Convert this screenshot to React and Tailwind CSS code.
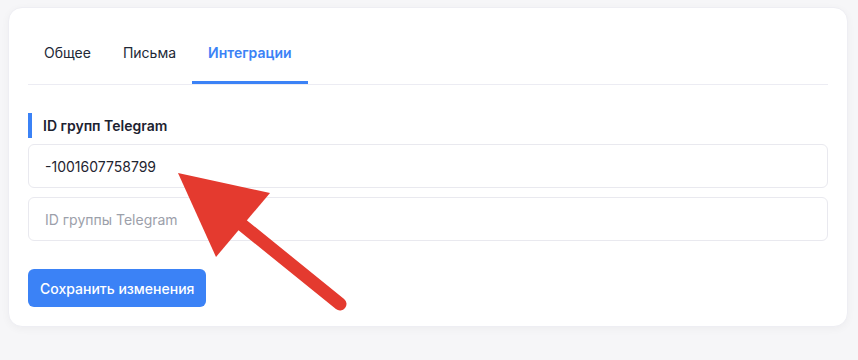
export default function App() {
  return (
    <div className="min-h-[360px] w-[858px] bg-[#f6f6f8] pt-[7px] px-[8px] relative" style={{ fontFamily: "Inter, 'Noto Sans', sans-serif" }}>
      <div className="w-[840px] rounded-[14px] bg-white border border-[#eeeef3] shadow-[0_2px_8px_rgba(0,0,0,0.04)] px-[19px] pt-[19px] pb-[19px]">
        <div className="flex border-b border-[#ececf3]">
          <div className="px-4 pt-4 pb-[18px] border-b-[3px] border-transparent text-[14px] leading-5 text-[#222836]">Общее</div>
          <div className="px-4 pt-4 pb-[18px] border-b-[3px] border-transparent text-[14px] leading-5 text-[#222836]">Письма</div>
          <div className="px-4 pt-4 pb-[18px] border-b-[3px] border-[#3b82f6] text-[14px] leading-5 font-semibold text-[#3b82f6]">Интеграции</div>
        </div>
        <div className="mt-[28px] flex items-center h-[25px] border-l-4 border-[#3b82f6] pl-[11px] text-[14px] font-semibold text-[#1d2230]">ID групп Telegram</div>
        <div className="mt-[6px] flex flex-col gap-[9px]">
          <input
            className="h-[44px] w-full rounded-[6px] border border-[#e9e9ef] px-4 text-[14px] text-[#1f2430] outline-none"
            style={{ fontFamily: "Inter, sans-serif" }}
            defaultValue="-1001607758799"
          />
          <input
            className="h-[44px] w-full rounded-[6px] border border-[#e9e9ef] px-4 text-[14px] text-[#1f2430] placeholder:text-[#9ca0aa] outline-none"
            style={{ fontFamily: "Inter, sans-serif" }}
            placeholder="ID группы Telegram"
          />
        </div>
        <button className="mt-[28px] h-[38px] rounded-[6px] bg-[#3b82f6] px-3 text-[14px] font-medium text-white">
          Сохранить изменения
        </button>
      </div>
      <svg className="absolute left-0 top-0 pointer-events-none" width="858" height="360" viewBox="0 0 858 360">
        <line x1="230" y1="215" x2="340" y2="304" stroke="#e43a2f" strokeWidth="13" strokeLinecap="round" />
        <polygon points="178,173 270,193 216,257" fill="#e43a2f" />
      </svg>
    </div>
  );
}
